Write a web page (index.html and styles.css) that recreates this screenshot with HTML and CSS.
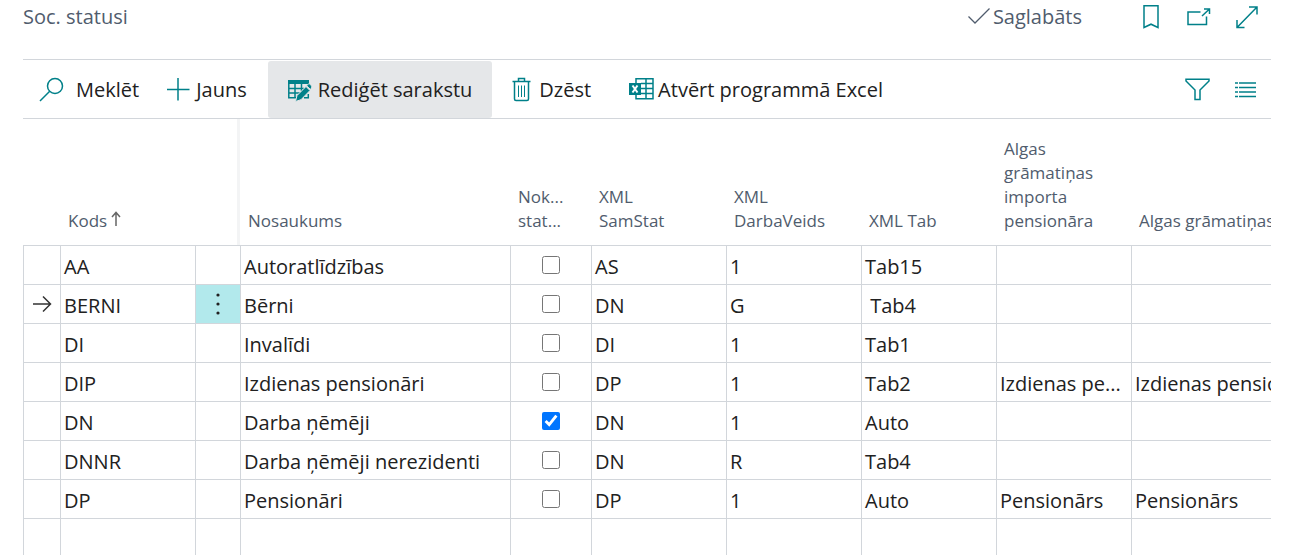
FILE: index.html
```html
<!DOCTYPE html>
<html lang="lv">
<head>
<meta charset="utf-8">
<title>Soc. statusi</title>
<link rel="stylesheet" href="styles.css">
</head>
<body>
<div class="page">
  <header class="titlebar">
    <h1 class="title">Soc. statusi</h1>
    <div class="saved">
      <svg class="check" width="24" height="24" viewBox="0 0 24 24"><path d="M1.500 11.500 8 18 22.500 3.500"/></svg>
      <span>Saglabāts</span>
    </div>
    <div class="window-actions">
      <button class="icon-btn" type="button" aria-label="Grāmatzīme"><svg width="24" height="26" viewBox="0 0 24 26"><path d="M5 1.800H19V23.500L12 20.200 5 23.500Z"/></svg></button>
      <button class="icon-btn" type="button" aria-label="Atvērt jaunā logā"><svg width="24" height="26" viewBox="0 0 24 26"><path d="M13.500 8H1V20.500H19.500V12.500M15 12 22.500 5M17 5H22.500V10"/></svg></button>
      <button class="icon-btn" type="button" aria-label="Izvērst"><svg width="24" height="26" viewBox="0 0 24 26"><path d="M2 23.500 22 3M14 3H22V10.500M2 16V23.500H9.500"/></svg></button>
    </div>
  </header>

  <div class="toolbar">
    <button class="action search" type="button">
      <svg width="25" height="26" viewBox="0 0 25 26"><circle cx="16" cy="9" r="7.500"/><path d="M10.700 14.300 1 24"/></svg>
      <span>Meklēt</span>
    </button>
    <button class="action new" type="button">
      <svg width="24" height="26" viewBox="0 0 24 26"><path d="M12 1V23.500M1 12.500H23.500"/></svg>
      <span>Jauns</span>
    </button>
    <button class="action active" type="button" aria-pressed="true">
      <svg width="24" height="26" viewBox="0 0 24 26"><path class="fill" d="M0 3H21V7H0Z"/><path d="M.8 5V20.800H9M1 11.500H16M1 16H12M7 7V20.800M13.500 7V14M20.300 5V8.500M20.300 17V20.800H16"/><path class="pencil" d="M7.500 24.500 9 18.500 18 9.500 22 13.500 13 22.700ZM18.500 8.700 20.500 7Q21.500 6.500 22.800 7.800 24.200 9.300 23.500 10.800L22.500 12.500Z"/></svg>
      <span>Rediģēt sarakstu</span>
    </button>
    <button class="action delete" type="button">
      <svg width="19" height="26" viewBox="0 0 19 26"><path d="M.5 4.500H18.500M6.500 4V1.500H12.500V4M2.500 5V22Q2.500 23.500 4 23.500H15Q16.500 23.500 16.500 22V5"/><path class="thin" d="M6.500 8.500V20M9.500 8.500V20M12.500 8.500V20"/></svg>
      <span>Dzēst</span>
    </button>
    <button class="action excel" type="button">
      <svg width="25" height="26" viewBox="0 0 25 26"><path d="M7 6V1.800H24V21.800H7V18M12 6.500H24M12 11.500H24M12 16.500H24M17 2V21.500"/><path class="fill" d="M0 6H12V18H0Z"/><path class="cross" d="M3.500 8.500 8.500 15.500M8.500 8.500 3.500 15.500"/></svg>
      <span>Atvērt programmā Excel</span>
    </button>
    <div class="view-actions">
      <button class="icon-btn" type="button" aria-label="Filtrs"><svg width="26" height="26" viewBox="0 0 26 26"><path d="M1 2.300H24V4L15 13V22.500H10V13L1 4Z"/></svg></button>
      <button class="icon-btn" type="button" aria-label="Saraksts"><svg width="22" height="26" viewBox="0 0 22 26"><path d="M0 6H3M4 6H21M0 10.500H3M4 10.500H21M0 15H3M4 15H21M0 19.500H3M4 19.500H21"/></svg></button>
    </div>
  </div>

  <div class="grid-wrap">
    <table class="grid">
      <colgroup><col class="c-mark"><col class="c-std"><col class="c-menu"><col class="c-name"><col class="c-check"><col class="c-std"><col class="c-std"><col class="c-std"><col class="c-std"><col></colgroup>
      <thead>
        <tr>
          <th></th>
          <th scope="col">Kods<svg class="sort" width="10" height="16" viewBox="0 0 10 16"><path d="M5 15V2M1 6 5 1.500 9 6"/></svg></th>
          <th class="frozen"></th>
          <th scope="col">Nosaukums</th>
          <th scope="col" id="default">Nok...<br>stat...</th>
          <th scope="col">XML SamStat</th>
          <th scope="col">XML DarbaVeids</th>
          <th scope="col">XML Tab</th>
          <th scope="col">Algas grāmatiņas importa pensionāra</th>
          <th scope="col" class="nowrap">Algas grāmatiņas</th>
        </tr>
      </thead>
      <tbody>
        <tr><td></td><td>AA</td><td></td><td>Autoratlīdzības</td><td class="tick"><input type="checkbox" aria-labelledby="default"></td><td>AS</td><td>1</td><td>Tab15</td><td></td><td></td></tr>
        <tr><td class="marker"><svg width="20" height="18" viewBox="0 0 20 18"><path d="M1 9H18.500M11 1.500 18.500 9 11 16.500"/></svg></td><td>BERNI</td><td class="menu"><button class="row-menu" type="button" aria-label="Rādīt vairāk opciju"><svg width="4" height="22" viewBox="0 0 4 22"><circle cx="2" cy="2" r="1.600"/><circle cx="2" cy="11" r="1.600"/><circle cx="2" cy="20" r="1.600"/></svg></button></td><td>Bērni</td><td class="tick"><input type="checkbox" aria-labelledby="default"></td><td>DN</td><td>G</td><td>&nbsp;Tab4</td><td></td><td></td></tr>
        <tr><td></td><td>DI</td><td></td><td>Invalīdi</td><td class="tick"><input type="checkbox" aria-labelledby="default"></td><td>DI</td><td>1</td><td>Tab1</td><td></td><td></td></tr>
        <tr><td></td><td>DIP</td><td></td><td>Izdienas pensionāri</td><td class="tick"><input type="checkbox" aria-labelledby="default"></td><td>DP</td><td>1</td><td>Tab2</td><td>Izdienas pe...</td><td>Izdienas pensionāri</td></tr>
        <tr><td></td><td>DN</td><td></td><td>Darba ņēmēji</td><td class="tick"><input type="checkbox" aria-labelledby="default" checked></td><td>DN</td><td>1</td><td>Auto</td><td></td><td></td></tr>
        <tr><td></td><td>DNNR</td><td></td><td>Darba ņēmēji nerezidenti</td><td class="tick"><input type="checkbox" aria-labelledby="default"></td><td>DN</td><td>R</td><td>Tab4</td><td></td><td></td></tr>
        <tr><td></td><td>DP</td><td></td><td>Pensionāri</td><td class="tick"><input type="checkbox" aria-labelledby="default"></td><td>DP</td><td>1</td><td>Auto</td><td>Pensionārs</td><td>Pensionārs</td></tr>
        <tr><td></td><td></td><td></td><td></td><td></td><td></td><td></td><td></td><td></td><td></td></tr>
      </tbody>
    </table>
  </div>
</div>
</body>
</html>
```
FILE: styles.css
```css
* { box-sizing: border-box; }

body {
  margin: 0;
  background: #fff;
  color: #212121;
  font: 20px/28px "Open Sans", "Noto Sans", sans-serif;
}

button {
  border: 0;
  padding: 0;
  background: none;
  color: inherit;
  font: inherit;
}

svg {
  flex: none;
  fill: none;
  stroke: #008089;
  stroke-width: 1.5;
}

.fill { fill: #008089; stroke: none; }
.pencil { fill: #008089; stroke: #e5e7e9; stroke-width: 1; }
.cross { stroke: #fff; stroke-width: 2; }
.thin { stroke-width: 1; }

.page {
  display: flex;
  flex-direction: column;
  height: 100vh;
  padding: 0 23px;
  overflow: hidden;
}

.titlebar {
  display: flex;
  align-items: center;
  padding: 3px 12px 28px 0;
  color: #505c6d;
}

.title {
  margin: 0 auto 0 0;
  font-size: 20px;
  line-height: 28px;
  font-weight: 400;
}

.saved {
  display: flex;
  align-items: center;
  gap: 2px;
  margin-right: 57px;
}

.check { stroke: #505c6d; stroke-width: 1.3; }

.window-actions, .view-actions { display: flex; align-items: center; gap: 24px; }

.icon-btn { display: flex; }

.toolbar {
  display: flex;
  height: 60px;
  flex: none;
  padding: 1px 14px 0 0;
  border-top: 1px solid #d2d6db;
  border-bottom: 1px solid #d2d6db;
}

.action {
  display: flex;
  align-items: center;
  gap: 6px;
  padding: 0 20px;
  border-radius: 3px;
  white-space: nowrap;
}

.action.search { gap: 12px; padding: 0 12px 0 16px; }
.action.new { padding: 0 21px 0 15px; }
.action.delete { gap: 8px; padding-right: 18px; }
.action.active { background: #e5e7e9; }
.action.excel { gap: 4px; }

.view-actions { margin-left: auto; }

.grid-wrap { flex: 1; min-height: 0; overflow: hidden; }

.grid {
  width: 100%;
  min-width: 1360px;
  table-layout: fixed;
  border-spacing: 0;
}

.c-mark { width: 37px; }
.c-std { width: 135px; }
.c-menu { width: 45px; }
.c-name { width: 270px; }
.c-check { width: 81px; }

th {
  padding: 18px 32px 12px 8px;
  color: #505c6d;
  font-size: 17px;
  line-height: 24px;
  font-weight: 400;
  text-align: left;
  vertical-align: bottom;
}

.nowrap { white-space: nowrap; }
.frozen { border-right: 3px solid #f3f4f5; }
.sort { margin-left: 4px; stroke: #666; }

td {
  height: 39px;
  padding: 4px 6px 0 3px;
  border-top: 1px solid #d2d6db;
  border-left: 1px solid #d2d6db;
  overflow: hidden;
  text-overflow: ellipsis;
  white-space: nowrap;
}

td.marker, td.menu, td.tick { padding: 0; text-align: center; }
.marker svg { display: block; margin: auto; stroke: #333; }
.menu { background: #b2e9ec; }
.row-menu { display: flex; align-items: center; justify-content: center; width: 100%; height: 38px; }
.row-menu svg { fill: #212121; stroke: none; }

.tick input {
  display: block;
  width: 18px;
  height: 18px;
  margin: 0 auto;
}
```
